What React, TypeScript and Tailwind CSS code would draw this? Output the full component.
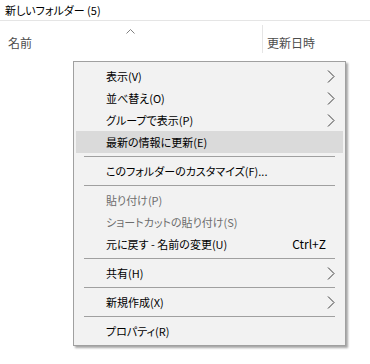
const FONT = "[font-family:'Noto_Sans_CJK_JP','Noto_Sans',sans-serif] [font-feature-settings:'palt']";

type Entry =
  | { kind: "item"; label: string; sub?: boolean; shortcut?: string; disabled?: boolean; active?: boolean }
  | { kind: "sep" };

const MENU: Entry[] = [
  { kind: "item", label: "表示(V)", sub: true },
  { kind: "item", label: "並べ替え(O)", sub: true },
  { kind: "item", label: "グループで表示(P)", sub: true },
  { kind: "item", label: "最新の情報に更新(E)", active: true },
  { kind: "sep" },
  { kind: "item", label: "このフォルダーのカスタマイズ(F)..." },
  { kind: "sep" },
  { kind: "item", label: "貼り付け(P)", disabled: true },
  { kind: "item", label: "ショートカットの貼り付け(S)", disabled: true },
  { kind: "item", label: "元に戻す - 名前の変更(U)", shortcut: "Ctrl+Z" },
  { kind: "sep" },
  { kind: "item", label: "共有(H)", sub: true },
  { kind: "sep" },
  { kind: "item", label: "新規作成(X)", sub: true },
  { kind: "sep" },
  { kind: "item", label: "プロパティ(R)" },
];

function Chevron() {
  return (
    <svg width="8" height="13" viewBox="0 0 8 13" className="shrink-0">
      <polyline points="1,0.5 7,6.5 1,12.5" fill="none" stroke="#3c3c3c" strokeWidth="1" />
    </svg>
  );
}

function ContextMenu() {
  return (
    <div className="absolute left-[73px] top-[61px] w-[273px] border border-[#a0a0a0] bg-[#f2f2f2] px-[2px] py-[3px] shadow-[2px_2px_2px_rgba(0,0,0,0.35)]">
      {MENU.map((e, i) =>
        e.kind === "sep" ? (
          <div key={i} className="flex h-[7px] items-center px-2">
            <div className="h-px w-full bg-[#a0a0a0]" />
          </div>
        ) : (
          <div
            key={i}
            className={`flex h-[22px] items-center pl-[30px] pr-2 text-[11px] ${
              e.active ? "bg-[#dadada]" : ""
            } ${e.disabled ? "text-[#6d6d6d]" : "text-black"}`}
          >
            <span className="flex-1 whitespace-nowrap">{e.label}</span>
            {e.shortcut ? <span className="pr-[9px] text-[12px]">{e.shortcut}</span> : null}
            {e.sub ? <Chevron /> : null}
          </div>
        )
      )}
    </div>
  );
}

export default function App() {
  return (
    <div className={`relative h-[364px] w-[370px] overflow-hidden bg-white text-black ${FONT}`}>
      <div className="flex h-[21px] items-center border-b border-[#e5e5e5] pl-[5px] text-[11px]">
        新しいフォルダー (5)
      </div>
      <div className="relative flex h-[36px] text-[12px] text-[#4c4c4c]">
        <div className="flex w-[262px] items-center pl-[8px] pt-[8px]">名前</div>
        <svg width="9" height="5" viewBox="0 0 9 5" className="absolute left-[126px] top-[8px]">
          <polyline points="0.5,4.5 4.5,0.5 8.5,4.5" fill="none" stroke="#808080" strokeWidth="1" />
        </svg>
        <div className="my-[4px] w-px bg-[#e5e5e5]" />
        <div className="flex items-center pl-[4px] pt-[8px]">更新日時</div>
      </div>
      <ContextMenu />
    </div>
  );
}
